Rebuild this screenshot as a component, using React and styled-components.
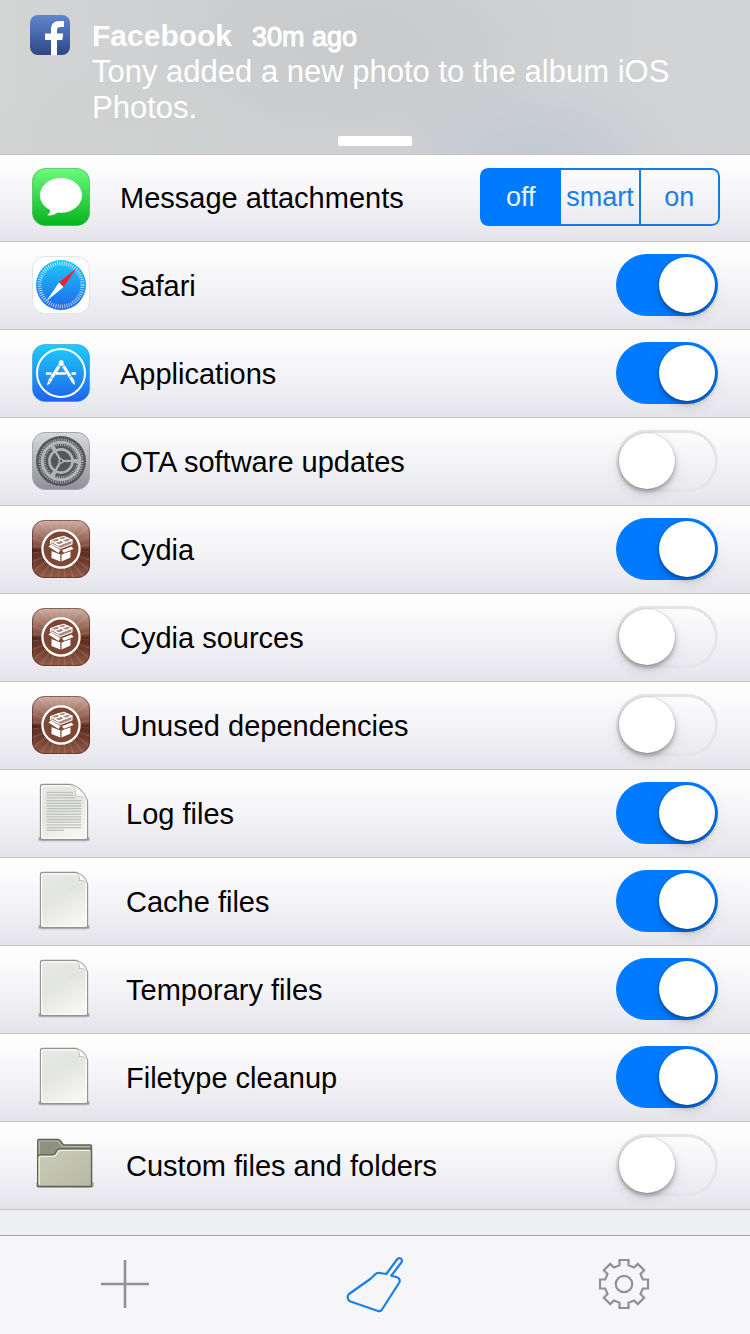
import React, { useState } from 'react';
import styled, { createGlobalStyle } from 'styled-components';

const GlobalStyle = createGlobalStyle`
    * {
        box-sizing: border-box;
    }
    body {
        margin: 0;
        background: #eeeff1;
        font-family: "Liberation Sans", Arial, sans-serif;
        color: #000;
    }
`;

const Page = styled.div`
    display: flex;
    flex-direction: column;
    min-height: 100vh;
`;

const Banner = styled.header`
    position: relative;
    padding: 16px 30px 8px;
    color: #fff;
    background:
        radial-gradient(ellipse 150px 80px at 71% 100%, rgba(188, 197, 210, 0.7), transparent),
        radial-gradient(ellipse 160px 90px at 18% 100%, rgba(205, 210, 207, 0.8), transparent),
        radial-gradient(ellipse 210px 110px at 49% 30%, #c8c9cb, transparent),
        linear-gradient(90deg, #d3d4d4, #cecfd1 30%, #d2d3d5);
    box-shadow: 0 1px 0 #c3c3c7;
`;

const BannerContent = styled.div`
    display: flex;
    align-items: flex-start;
    gap: 22px;
    svg {
        flex: none;
        margin-top: -1px;
    }
`;

const BannerTitle = styled.div`
    display: flex;
    align-items: center;
    gap: 20px;
    padding-top: 2px;
    line-height: 36px;
    font-size: 30px;
    font-weight: bold;
    time {
        padding-top: 2px;
        line-height: 34px;
        font-size: 27px;
        font-weight: normal;
        -webkit-text-stroke: 1px #fff;
    }
`;

const BannerMessage = styled.p`
    margin: 0;
    font-size: 31px;
    line-height: 36px;
`;

const Grabber = styled.div`
    width: 74px;
    height: 10px;
    margin: 10px auto 0;
    border-radius: 2px;
    background: #fff;
`;

const List = styled.main`
    flex: none;
`;

const Row = styled.div`
    display: flex;
    align-items: center;
    min-height: 88px;
    padding: 0 30px 1px 32px;
    border-bottom: 1px solid #c5c4cb;
    background: linear-gradient(#fff, #f8f8fa 35%, #e5e4eb);
    > svg {
        flex: none;
        margin-right: 30px;
    }
`;

const RowLabel = styled.label`
    flex: 1;
    padding-top: 2px;
    font-size: 29px;
    line-height: 36px;
`;

const Switch = styled.input`
    appearance: none;
    flex: none;
    width: 102px;
    height: 62px;
    margin: 0 2px 0 0;
    padding: 3px;
    border-radius: 31px;
    box-shadow: inset 0 0 0 3px #e5e5e7;
    cursor: pointer;
    &::before {
        content: '';
        display: block;
        width: 56px;
        height: 56px;
        border-radius: 50%;
        background: #fff;
        box-shadow: 0 3px 4px rgba(0, 0, 0, 0.28), 0 5px 14px rgba(0, 0, 0, 0.12), 0 0 1px rgba(0, 0, 0, 0.3);
    }
    &:checked {
        background: #007aff;
        box-shadow: none;
    }
    &:checked::before {
        margin-left: 40px;
    }
`;

const Segments = styled.div`
    display: flex;
    flex: none;
    width: 240px;
    height: 58px;
    border-radius: 8px;
    overflow: hidden;
`;

const Segment = styled.label`
    flex: 1;
    display: flex;
    align-items: center;
    justify-content: center;
    border: solid #147ae8;
    border-width: 2px 2px 2px 0;
    font-size: 27px;
    color: #1a7ee6;
    cursor: pointer;
    &:first-child {
        border-left-width: 2px;
        border-radius: 8px 0 0 8px;
    }
    &:last-child {
        border-radius: 0 8px 8px 0;
    }
    &:has(input:checked) {
        border-color: #007aff;
        color: #e9f2fd;
        background: #007aff;
    }
    input {
        appearance: none;
        width: 0;
        height: 0;
        margin: 0;
    }
`;

const TabBar = styled.nav`
    display: flex;
    height: 99px;
    margin-top: auto;
    border-top: 1px solid #a2a2a6;
    background: #f6f6f8;
`;

const Tab = styled.button`
    flex: 1;
    display: flex;
    align-items: center;
    justify-content: center;
    padding: 0 0 2px;
    border: none;
    background: none;
    color: ${props => (props.$active ? '#187fe9' : '#929295')};
    cursor: pointer;
`;

const FacebookIcon = () => (
    <svg width="40" height="40" viewBox="0 0 40 40" aria-hidden="true">
        <linearGradient id="fb" x1="0" y1="0" x2="0" y2="1">
            <stop offset="0" stopColor="#6085cf" />
            <stop offset="1" stopColor="#2d4884" />
        </linearGradient>
        <rect width="40" height="40" rx="8" fill="url(#fb)" />
        <path d="M21 40V25H15V18.5H21V15C21 9 24 6 29.5 6H34V12H30.5C28 12 27 13 27 15.5V18.5H33.2L32.4 25H27V40Z" fill="#fff" />
    </svg>
);

const MessagesIcon = () => (
    <svg width="58" height="58" viewBox="0 0 58 58" aria-hidden="true">
        <linearGradient id="msg" x1="0" y1="0" x2="0" y2="1">
            <stop offset="0" stopColor="#6bfb7c" />
            <stop offset="1" stopColor="#05b41d" />
        </linearGradient>
        <rect x="0.5" y="0.5" width="57" height="57" rx="12.5" fill="url(#msg)" stroke="#2fa840" strokeOpacity="0.55" />
        <ellipse cx="29" cy="27.3" rx="21" ry="17.4" fill="#fff" />
        <path d="M18 40C18.6 43.5 17.5 46 15 47.3C19.5 47.8 23.5 46.5 26.5 43.5Z" fill="#fff" />
    </svg>
);

const SafariIcon = () => (
    <svg width="58" height="58" viewBox="0 0 58 58" aria-hidden="true">
        <linearGradient id="saf" x1="0" y1="0" x2="0" y2="1">
            <stop offset="0" stopColor="#1bcbfb" />
            <stop offset="1" stopColor="#1f64e8" />
        </linearGradient>
        <rect x="0.5" y="0.5" width="57" height="57" rx="12.5" fill="#fff" stroke="#e3e3e6" />
        <circle cx="29" cy="29" r="25" fill="url(#saf)" />
        <circle cx="29" cy="29" r="21.5" fill="none" stroke="#fff" strokeOpacity="0.7" strokeWidth="4" strokeDasharray="0.9 1.35" />
        <path d="M44.7 12L27 26.5L31.5 31Z" fill="#f5202b" />
        <path d="M14 45.5L27 26.5L31.5 31Z" fill="#fff" />
    </svg>
);

const AppStoreIcon = () => (
    <svg width="58" height="58" viewBox="0 0 58 58" aria-hidden="true">
        <linearGradient id="aps" x1="0" y1="0" x2="0" y2="1">
            <stop offset="0" stopColor="#1fcdfa" />
            <stop offset="1" stopColor="#1e63ee" />
        </linearGradient>
        <rect x="0.5" y="0.5" width="57" height="57" rx="12.5" fill="url(#aps)" stroke="#1a86d8" strokeOpacity="0.5" />
        <circle cx="29" cy="29" r="24" fill="none" stroke="#fff" strokeWidth="2" />
        <g stroke="#fff" fill="none">
            <path d="M14 29.5H19.5M23.5 29.5H34M39.500 29.5H44" strokeWidth="2.6" />
            <path d="M30.5 16.5L17.5 37.2" strokeWidth="3.2" />
            <path d="M28 16.5L40.800 37" strokeWidth="3.2" />
            <path d="M25.500 21L28.5 22.8M18.200 33L21.200 35M30 22.700L33 20.900M36.800 33.500L39.800 31.700" stroke="#2090f4" strokeWidth="0.8" />
        </g>
        <path d="M16 36.8L19 38.7L15 41.5ZM39.200 38L42.300 36L43 41.2Z" fill="#fff" />
    </svg>
);

const SettingsIcon = () => (
    <svg width="58" height="58" viewBox="0 0 58 58" aria-hidden="true">
        <linearGradient id="set" x1="0" y1="0" x2="0" y2="1">
            <stop offset="0" stopColor="#d6d8da" />
            <stop offset="1" stopColor="#8f9197" />
        </linearGradient>
        <rect x="0.5" y="0.5" width="57" height="57" rx="12.5" fill="url(#set)" stroke="#a7a8aa" />
        <circle cx="29" cy="29" r="25" fill="#55575a" />
        <circle cx="29" cy="29" r="21.5" fill="none" stroke="#b4b6b9" strokeWidth="2" strokeDasharray="1 1.25" />
        <circle cx="29" cy="29" r="18.8" fill="none" stroke="#b4b6b9" strokeWidth="3" />
        <circle cx="29" cy="29" r="16.2" fill="none" stroke="#b4b6b9" strokeWidth="1.6" strokeDasharray="1 1.2" />
        <circle cx="29" cy="29" r="11.6" fill="none" stroke="#b2b4b7" strokeWidth="2.6" />
        {[0, 120, 240].map(angle => (
            <path key={angle} d="M29 29H47" stroke="#b2b4b7" strokeWidth="2.2" transform={`rotate(${angle} 29 29)`} />
        ))}
        {[0, 120, 240].map(angle => (
            <path key={angle} d="M40 29H47" stroke="#b2b4b7" strokeWidth="4" transform={`rotate(${angle} 29 29)`} />
        ))}
        <circle cx="29" cy="29" r="2.6" fill="#b2b4b7" />
        <circle cx="29" cy="29" r="1.2" fill="#505153" />
    </svg>
);

const rays = Array.from({ length: 24 }, (_, i) => i * 15);

const CydiaIcon = () => (
    <svg width="58" height="58" viewBox="0 0 58 58" aria-hidden="true">
        <linearGradient id="cyd" x1="0" y1="0" x2="0" y2="1">
            <stop offset="0" stopColor="#d0b0a5" />
            <stop offset="0.46" stopColor="#7f4b3b" />
            <stop offset="0.52" stopColor="#54271b" />
            <stop offset="1" stopColor="#935c49" />
        </linearGradient>
        <clipPath id="cydClip">
            <rect width="58" height="58" rx="12.5" />
        </clipPath>
        <g clipPath="url(#cydClip)">
            <rect width="58" height="58" fill="url(#cyd)" />
            {rays.map(angle => (
                <path key={angle} d="M29 29L70 27.5V30.5Z" fill="#f0cdbb" opacity="0.13" transform={`rotate(${angle + 6} 29 29)`} />
            ))}
        </g>
        <rect x="0.5" y="0.5" width="57" height="57" rx="12" fill="none" stroke="#3c1810" strokeOpacity="0.5" />
        <circle cx="29" cy="29" r="18.6" fill="#7d4736" stroke="#fff" strokeWidth="2.2" />
        <g fill="#fff">
            <path d="M19.5 31L28.300 34.600V41.500L19.5 38Z" />
            <path d="M29.5 34.600L38.5 31.200V37.5L29.5 41.5Z" />
            <path d="M16.5 26.500L18.800 24.600L28.500 30L26.5 33Z" />
            <path d="M29.800 30.200L39.5 26.500L41.5 29L32 32.8Z" />
        </g>
        <g fill="#fff" fillOpacity="0.35" stroke="#fff" strokeWidth="1.100" strokeLinejoin="round">
            <path d="M18.500 20.500L25.500 18L29.200 20.200L22.500 22.600Z" />
            <path d="M25.500 18L31.800 16.300L35.700 18L29.200 20.200Z" />
            <path d="M22.500 22.600L29.200 20.200L33.200 22.500L26.500 25.200Z" />
            <path d="M29.200 20.200L35.700 18L40 20L33.200 22.500Z" />
            <path d="M18.500 20.500V23.500L28.500 28.500L40 24V20L26.500 25.200Z" />
        </g>
    </svg>
);

const FileShape = ({ id, outline, curl, children }) => (
    <svg width="64" height="64" viewBox="0 0 64 64" aria-hidden="true">
        <linearGradient id={id} x1="0" y1="0" x2="0.5" y2="1">
            <stop offset="0" stopColor="#e8e9e6" />
            <stop offset="0.5" stopColor="#e3e5e0" />
            <stop offset="1" stopColor="#f4f4f3" />
        </linearGradient>
        <rect x="6" y="55.5" width="52" height="5" rx="2.5" fill="#000" opacity="0.14" />
        <rect x="7" y="56" width="50" height="3.5" rx="1.5" fill="#000" opacity="0.2" />
        <path d={outline} fill={`url(#${id})`} stroke="#939492" strokeWidth="1.3" />
        <path d={outline} fill="none" stroke="#fff" strokeWidth="1.3" transform="translate(1.5 1.5) scale(0.953)" />
        {children}
        <path d={curl} fill="#fbfbfa" stroke="#b4b5b1" strokeWidth="0.7" />
    </svg>
);

const TextFileIcon = () => (
    <FileShape
        id="textFile"
        outline="M10.5 3.5H38C46 5 53 12 55.5 20V56.5Q55.5 58.5 53.5 58.5H10.5Q8.5 58.5 8.5 56.5V5.5Q8.5 3.5 10.5 3.5Z"
        curl="M38 3.5C43 5.5 44.5 10 43.5 15.5C48.5 14.5 53 16 55.5 20C53 12 46 5 38 3.5Z"
    >
        {Array.from({ length: 14 }, (_, i) => (
            <path key={i} d={`M14.7 ${11.5 + i * 2.7}H${i < 3 ? 41 + i : 49.3}`} stroke="#bfc1bd" strokeWidth="1.3" />
        ))}
        <path d="M14.7 49.3H32" stroke="#bfc1bd" strokeWidth="1.3" />
    </FileShape>
);

const FileIcon = () => (
    <FileShape
        id="file"
        outline="M10.5 3.5H44C49.5 5 53.5 9 55.5 15V56.5Q55.5 58.5 53.5 58.5H10.5Q8.5 58.5 8.5 56.5V5.5Q8.5 3.5 10.5 3.5Z"
        curl="M44 3.5C47 5.5 48 8 47.5 11.5C51 11 53.5 12 55.5 15C53.5 9 49.5 5 44 3.5Z"
    />
);

const FolderIcon = () => (
    <svg width="64" height="64" viewBox="0 0 64 64" aria-hidden="true">
        <linearGradient id="folder" x1="0" y1="0" x2="1" y2="1">
            <stop offset="0" stopColor="#ccceb9" />
            <stop offset="1" stopColor="#b6b8a2" />
        </linearGradient>
        <rect x="4" y="48" width="58" height="7" rx="3" fill="#000" opacity="0.2" />
        <path d="M7 6.5H26Q27.5 6.5 28.5 8L31.5 12H58.5Q59.5 12 59.5 13V53.3H5.7V8Q5.7 6.5 7 6.5Z" fill="#8f9180" stroke="#5e6056" strokeWidth="1.3" />
        <path d="M7.2 22V8H26L30.5 13.5H58" fill="none" stroke="#b9bba9" strokeWidth="1.2" />
        <path d="M5.7 24Q5.7 22 7.5 22H20Q22.5 22 23.5 20L25 17.5Q26 16 28 16H59.5V52Q59.5 53.5 58 53.5H7Q5.7 53.5 5.7 52Z" fill="url(#folder)" stroke="#5e6056" strokeWidth="1.3" />
        <path d="M7.2 51.5V24.5Q7.2 23.4 8.5 23.4H21Q23.5 23.4 24.5 21.5L26.3 18.5Q27 17.3 28.5 17.3H58" fill="none" stroke="#eff0e4" strokeWidth="1.2" />
    </svg>
);

const PlusIcon = () => (
    <svg width="48" height="48" viewBox="0 0 48 48" stroke="currentColor" strokeWidth="2.6" aria-hidden="true">
        <path d="M24 0V48M0 24H48" />
    </svg>
);

const BroomIcon = () => (
    <svg width="60" height="60" viewBox="1 0 60 60" fill="none" stroke="currentColor" strokeWidth="2.2" strokeLinejoin="round" aria-hidden="true">
        <path d="M42.3 20L53 5.5C55.5 2.5 59.5 5 57.3 8.5L47.3 21.7L52.5 23C55.5 24 56.5 26.5 55 29L38 55.5C37 57.3 36 57.5 34 57L6.5 47.5C3 46 3 42 5 40L26.3 25L31 20.5C32.5 19 33.5 18.7 35.5 19Z" />
    </svg>
);

const GearIcon = () => {
    const points = [0, 1, 2, 3, 4, 5, 6, 7].flatMap(i => {
        const a = (i * Math.PI) / 4;
        return [[-4.5, -18.8], [-4.5, -24], [4.5, -24], [4.5, -18.8]].map(
            ([x, y]) => `${25 + x * Math.cos(a) - y * Math.sin(a)},${26 + x * Math.sin(a) + y * Math.cos(a)}`
        );
    });
    return (
        <svg width="52" height="52" viewBox="0 0 52 52" fill="none" stroke="currentColor" strokeWidth="2.2" aria-hidden="true">
            <polygon points={points.join(' ')} />
            <circle cx="25" cy="26" r="8.2" />
        </svg>
    );
};

const items = [
    { id: 'safari', name: 'Safari', Icon: SafariIcon, on: true },
    { id: 'applications', name: 'Applications', Icon: AppStoreIcon, on: true },
    { id: 'ota', name: 'OTA software updates', Icon: SettingsIcon, on: false },
    { id: 'cydia', name: 'Cydia', Icon: CydiaIcon, on: true },
    { id: 'sources', name: 'Cydia sources', Icon: CydiaIcon, on: false },
    { id: 'unused', name: 'Unused dependencies', Icon: CydiaIcon, on: false },
    { id: 'logs', name: 'Log files', Icon: TextFileIcon, on: true },
    { id: 'cache', name: 'Cache files', Icon: FileIcon, on: true },
    { id: 'temp', name: 'Temporary files', Icon: FileIcon, on: true },
    { id: 'filetype', name: 'Filetype cleanup', Icon: FileIcon, on: true },
    { id: 'custom', name: 'Custom files and folders', Icon: FolderIcon, on: false },
];

const App = () => {
    const [mode, setMode] = useState('off');

    return (
        <Page>
            <GlobalStyle />
            <Banner>
                <BannerContent>
                    <FacebookIcon />
                    <div>
                        <BannerTitle>
                            <span>Facebook</span>
                            <time>30m ago</time>
                        </BannerTitle>
                        <BannerMessage>Tony added a new photo to the album iOS Photos.</BannerMessage>
                    </div>
                </BannerContent>
                <Grabber />
            </Banner>
            <List>
                <Row>
                    <MessagesIcon />
                    <RowLabel as="span" id="attachments">Message attachments</RowLabel>
                    <Segments role="radiogroup" aria-labelledby="attachments">
                        {['off', 'smart', 'on'].map(value => (
                            <Segment key={value}>
                                <input
                                    type="radio"
                                    name="attachments"
                                    value={value}
                                    checked={mode === value}
                                    onChange={() => setMode(value)}
                                />
                                {value}
                            </Segment>
                        ))}
                    </Segments>
                </Row>
                {items.map(({ id, name, Icon, on }) => (
                    <Row key={id}>
                        <Icon />
                        <RowLabel htmlFor={id}>{name}</RowLabel>
                        <Switch type="checkbox" id={id} defaultChecked={on} />
                    </Row>
                ))}
            </List>
            <TabBar>
                <Tab type="button" aria-label="Add"><PlusIcon /></Tab>
                <Tab type="button" aria-label="Clean" $active><BroomIcon /></Tab>
                <Tab type="button" aria-label="Settings"><GearIcon /></Tab>
            </TabBar>
        </Page>
    );
};

export default App;
